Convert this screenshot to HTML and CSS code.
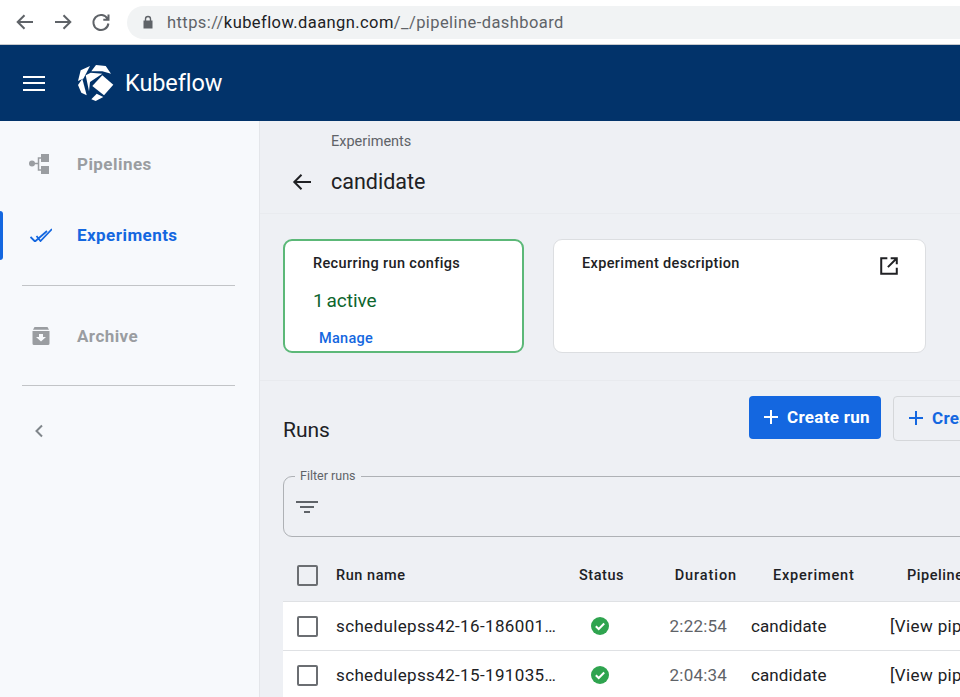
FILE: index.html
```html
<!DOCTYPE html>
<html lang="en">
<head>
<meta charset="utf-8">
<title>Kubeflow</title>
<link rel="stylesheet" href="styles.css">
</head>
<body>
<div class="browser">
  <svg class="nav-icon" viewBox="0 0 24 24"><path d="M20 12H5M11.500 5.200L4.700 12l6.800 6.800"/></svg>
  <svg class="nav-icon" viewBox="0 0 24 24"><path d="M4 12h15M12.500 5.200l6.800 6.800-6.800 6.800"/></svg>
  <svg class="nav-icon" viewBox="0 0 24 24"><path d="M18.600 9A7.500 7.500 0 1 0 19.400 13.500M19.500 4.500V9.700H14.300"/></svg>
  <div class="omnibox">
    <svg class="lock" viewBox="0 0 12 14"><path d="M2.800 5.500V4a3.200 3.200 0 0 1 6.400 0v1.500H10.500V13.500H1.500V5.500zM4.200 5.500H7.800V4a1.800 1.800 0 0 0-3.600 0z"/></svg>
    <span class="url"><span class="url-dim">https://</span>kubeflow.daangn.com<span class="url-dim">/_/pipeline-dashboard</span></span>
  </div>
</div>
<header class="appbar">
  <div class="burger"><i></i><i></i><i></i></div>
  <svg class="logo" viewBox="0 0 36 36">
    <path d="M0 16L2.700 5.300L12 1L5.500 13.500z"/>
    <path d="M13.300 6.300L18 0L27.700 1L33 8.700L24.300 6.300z"/>
    <path d="M7.700 10.300L12.700 7.700L24.300 8.700L12 17L11 26.300z"/>
    <path d="M24.300 10.300L35.300 19.700L26 30.300L14.300 21z"/>
    <path d="M13.300 34.300L18.700 28.700L25.300 32L17.700 36z"/>
    <path d="M0 20L4.300 13.700L8.700 30.300L3.300 27.700z"/>
  </svg>
  <span class="brand">Kubeflow</span>
</header>
<div class="layout">
  <nav class="sidebar">
    <a class="nav-item">
      <svg class="pipe-icon" viewBox="0 0 20 20"><circle cx="3" cy="9.500" r="3"/><rect x="12" y="0" width="8" height="8"/><rect x="12" y="12" width="8" height="8"/><path class="side-line" d="M5 9.500H9.500M12 4H9.500V16H12"/></svg>
      <span>Pipelines</span>
    </a>
    <a class="nav-item active">
      <svg class="check" viewBox="0 0 22 14"><path d="M0.500 9L5 13.500L17 3M6.500 8L10.500 13L22 1"/></svg>
      <span>Experiments</span>
    </a>
    <div class="rule"></div>
    <a class="nav-item archive">
      <svg class="box-icon" viewBox="0 0 20 20"><path d="M3.500 1H16.500L18 3.800H2zM1.500 5H18.500V17.500A1.500 1.500 0 0 1 17 19H3A1.500 1.500 0 0 1 1.500 17.500z"/><path class="arrow-cut" d="M8 8H12V11H15L10 15.500L5 11H8z"/></svg>
      <span>Archive</span>
    </a>
    <div class="rule"></div>
    <svg class="collapse" viewBox="0 0 12 16"><path d="M9 2.500L3.500 8L9 13.500"/></svg>
  </nav>
  <main class="main">
    <div class="titlebar">
      <div class="crumb">Experiments</div>
      <div class="title-row">
        <svg class="back" viewBox="0 0 24 24"><path d="M21 12H4M11.500 4.800L4.300 12l7.200 7.200"/></svg>
        <h1>candidate</h1>
      </div>
    </div>
    <section class="cards">
      <div class="card green">
        <div class="card-title">Recurring run configs</div>
        <div class="active-count">1 active</div>
        <a class="manage">Manage</a>
      </div>
      <div class="card desc">
        <div class="card-title">Experiment description</div>
        <svg class="launch" viewBox="0 0 18 18"><path d="M7.500 2H2V16H16V10.500M10.500 2H16V7.500M16 2L8 10"/></svg>
      </div>
    </section>
    <div class="divider"></div>
    <div class="runs-head">
      <h2>Runs</h2>
      <div class="actions">
        <button class="btn primary"><svg viewBox="0 0 16 16"><path d="M8 1V15M1 8H15"/></svg>Create run</button>
        <button class="btn ghost"><svg viewBox="0 0 16 16"><path d="M8 1V15M1 8H15"/></svg>Create recurring run</button>
      </div>
    </div>
    <fieldset class="filter">
      <legend>Filter runs</legend>
      <div class="filter-icon"><i></i><i></i><i></i></div>
    </fieldset>
    <div class="table">
      <div class="row head">
        <span class="cell box"><span class="checkbox"></span></span>
        <span class="cell name">Run name</span>
        <span class="cell status">Status</span>
        <span class="cell dur">Duration</span>
        <span class="cell exp">Experiment</span>
        <span class="cell pipe">Pipeline Version</span>
      </div>
      <div class="row">
        <span class="cell box"><span class="checkbox"></span></span>
        <span class="cell name">schedulepss42-16-186001…</span>
        <span class="cell status"><svg class="ok" viewBox="0 0 18 18"><circle cx="9" cy="9" r="9"/><path d="M4.800 9.300L7.700 12L13.200 6.500"/></svg></span>
        <span class="cell dur">2:22:54</span>
        <span class="cell exp">candidate</span>
        <span class="cell pipe">[View pipeline]</span>
      </div>
      <div class="row">
        <span class="cell box"><span class="checkbox"></span></span>
        <span class="cell name">schedulepss42-15-191035…</span>
        <span class="cell status"><svg class="ok" viewBox="0 0 18 18"><circle cx="9" cy="9" r="9"/><path d="M4.800 9.300L7.700 12L13.200 6.500"/></svg></span>
        <span class="cell dur">2:04:34</span>
        <span class="cell exp">candidate</span>
        <span class="cell pipe">[View pipeline]</span>
      </div>
    </div>
  </main>
</div>
</body>
</html>
```
FILE: styles.css
```css
* { box-sizing: border-box; }
html, body { margin: 0; height: 697px; overflow: hidden; }
body { width: 960px; font-family: Roboto, "Liberation Sans", sans-serif; background: #eef0f4; color: #202124; }
svg { display: block; flex: none; }

.browser { height: 45px; background: #fff; display: flex; align-items: center; padding: 0 0 0 13px; gap: 14px; border-bottom: 1px solid #c9cbce; }
.nav-icon { width: 24px; height: 24px; fill: none; stroke: #5f6368; stroke-width: 2; }
.omnibox { flex: 1; height: 33px; margin-left: 0; background: #f1f3f4; border-radius: 17px 0 0 17px; display: flex; align-items: center; padding-left: 15px; }
.lock { width: 12px; height: 14px; fill: #5f6368; }
.url { margin-left: 13px; font-size: 16.500px; letter-spacing: 0.42px; color: #202124; }
.url-dim { color: #5f6368; }

.appbar { height: 76px; background: #02336a; display: flex; align-items: center; padding-left: 23px; color: #fff; }
.burger { width: 22px; display: flex; flex-direction: column; gap: 4.500px; }
.burger i { height: 2px; background: #fff; }
.logo { width: 36px; height: 36px; margin-left: 33px; fill: #fff; }
.brand { margin-left: 11px; font-size: 23.500px; letter-spacing: -0.1px; }

.layout { display: flex; height: 576px; }
.sidebar { width: 260px; flex: none; background: #f7f9fc; border-right: 1px solid #e4e6ea; padding-top: 7px; }
.nav-item { height: 71px; display: grid; grid-template-columns: 48px auto; justify-content: start; align-items: center; padding-left: 29px; font-size: 17px; font-weight: 700; color: #9a9da1; letter-spacing: 0.45px; position: relative; }
.pipe-icon { width: 20px; height: 20px; fill: #9a9da1; }
.side-line { fill: none; stroke: #9a9da1; stroke-width: 1.500; }
.nav-item.active { color: #1467e0; margin-bottom: 15px; }
.nav-item.active::before { content: ""; position: absolute; left: 0; top: 12px; width: 3px; height: 49px; background: #1467e0; border-radius: 0 3px 3px 0; }
.check { width: 22px; height: 14px; margin-left: 1px; fill: none; stroke: #1467e0; stroke-width: 1.800; }
.box-icon { width: 20px; height: 20px; margin-left: 2px; fill: #9a9da1; }
.arrow-cut { fill: #f7f9fc; }
.archive { margin-top: 14px; margin-bottom: 14px; }
.rule { height: 1px; margin: 0 24px 0 22px; background: #c2c4c7; }
.collapse { width: 12px; height: 16px; margin: 37px 0 0 33px; fill: none; stroke: #80868b; stroke-width: 2; }

.main { flex: 1; min-width: 0; padding-left: 23px; overflow: hidden; }
.titlebar { height: 93px; margin-left: -23px; padding-left: 71px; padding-top: 12px; border-bottom: 1px solid #e9ebef; }
.crumb { font-size: 14.500px; color: #5f6368; line-height: 18px; }
.title-row { display: flex; align-items: center; margin-top: 16px; margin-left: -41px; gap: 17px; }
.back { width: 24px; height: 24px; fill: none; stroke: #202124; stroke-width: 2; }
h1 { margin: 0; font-size: 21.500px; font-weight: 400; line-height: 30px; }

.cards { display: flex; gap: 29px; margin-top: 25px; }
.card { height: 114px; background: #fff; border: 1px solid #dcdee1; border-radius: 9px; padding: 15px 29px 0; position: relative; }
.card.green { width: 241px; border: 2px solid #5cb878; padding: 14px 28px 0; }
.card.desc { width: 373px; padding-left: 28px; }
.card-title { font-size: 14.500px; font-weight: 500; line-height: 18px; letter-spacing: 0.36px; color: #202124; }
.active-count { margin-top: 16px; font-size: 19px; word-spacing: -2px; line-height: 24px; color: #0d652d; }
.manage { display: block; margin: 17px 0 0 6px; font-size: 14.500px; font-weight: 500; line-height: 18px; letter-spacing: 0.3px; color: #1467e0; }
.launch { position: absolute; top: 16px; right: 26px; width: 20px; height: 20px; fill: none; stroke: #202124; stroke-width: 1.800; }

.divider { height: 1px; margin: 27px 0 0 -23px; background: #e8eaee; }
.runs-head { position: relative; height: 87px; }
.runs-head h2 { margin: 0; position: absolute; left: 0; top: 36px; font-size: 21px; font-weight: 400; line-height: 26px; }
.actions { position: absolute; left: 466px; top: 15px; display: flex; gap: 12px; width: 600px; }
.btn { display: flex; align-items: center; flex: none; font: 700 17px Roboto, sans-serif; letter-spacing: 0.3px; border-radius: 4px; padding: 0 10px 1px 14px; white-space: nowrap; }
.btn svg { width: 16px; height: 16px; margin-right: 8px; fill: none; stroke-width: 2; }
.primary { background: #1467e0; color: #fff; border: 0; width: 132px; height: 43px; }
.primary svg { stroke: #fff; }
.ghost { background: transparent; color: #1467e0; border: 1px solid #d5d7da; height: 45px; }
.ghost svg { stroke: #1467e0; }

.filter { margin: 0 -400px 0 0; padding: 0; height: 69px; border: 1px solid #aeb1b5; border-radius: 9px; width: 1000px; }
.filter legend { margin-left: 11px; padding: 0 5px; font-size: 12.500px; line-height: 16px; color: #5f6368; }
.filter-icon { margin: 17px 0 0 12px; width: 22px; display: flex; flex-direction: column; align-items: center; gap: 3px; }
.filter-icon i { height: 2px; background: #5f6368; }
.filter-icon i:nth-child(1) { width: 22px; }
.filter-icon i:nth-child(2) { width: 14px; }
.filter-icon i:nth-child(3) { width: 6px; }

.table { width: 900px; margin-top: 12px; }
.row { height: 49px; display: grid; grid-template-columns: 53px 243px 68px 90px 143px 1fr; align-items: center; background: #fff; border-top: 1px solid #dfe1e4; font-size: 17px; letter-spacing: 0.36px; color: #202124; white-space: nowrap; }
.row.head { height: 52px; background: transparent; border-top: 0; font-size: 14.500px; font-weight: 500; letter-spacing: 0.55px; }
.cell { display: block; }
.box { padding-left: 14px; }
.checkbox { display: block; width: 21px; height: 21px; border: 2px solid #6b6e72; border-radius: 2px; }
.status { justify-self: start; }
.row:not(.head) .status { padding-left: 12px; }
.row .dur { text-align: right; padding-right: 10px; color: #5f6368; letter-spacing: 0.2px; }
.row.head .dur { color: #202124; padding-right: 0; letter-spacing: 0.9px; }
.exp { padding-left: 14px; letter-spacing: 0.1px; }
.row.head .exp { padding-left: 36px; letter-spacing: 0.8px; }
.pipe { padding-left: 10px; }
.row.head .pipe { padding-left: 27px; }
.ok { width: 18px; height: 18px; }
.ok circle { fill: #2fa44f; }
.ok path { fill: none; stroke: #fff; stroke-width: 2; }
```
